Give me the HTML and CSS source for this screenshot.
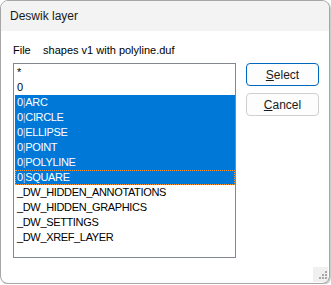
FILE: index.html
```html
<!DOCTYPE html>
<html lang="en">
<head>
    <meta charset="UTF-8">
    <title>Deswik layer</title>
    <link rel="stylesheet" href="styles.css">
</head>
<body>
    <div class="window">
        <div class="titlebar">Deswik layer</div>

        <div class="content">
            <div class="file-row">
                <span class="file-label">File</span>
                <span class="file-name">shapes v1 with polyline.duf</span>
            </div>

            <div class="main">
                <div class="listbox">
                    <div class="item">*</div>
                    <div class="item">0</div>
                    <div class="item selected">0<span class="pipe">|</span>ARC</div>
                    <div class="item selected">0<span class="pipe">|</span>CIRCLE</div>
                    <div class="item selected">0<span class="pipe">|</span>ELLIPSE</div>
                    <div class="item selected">0<span class="pipe">|</span>POINT</div>
                    <div class="item selected">0<span class="pipe">|</span>POLYLINE</div>
                    <div class="item selected focused">0<span class="pipe">|</span>SQUARE</div>
                    <div class="item">_DW_HIDDEN_ANNOTATIONS</div>
                    <div class="item">_DW_HIDDEN_GRAPHICS</div>
                    <div class="item">_DW_SETTINGS</div>
                    <div class="item">_DW_XREF_LAYER</div>
                </div>

                <div class="buttons">
                    <button class="btn default"><u>S</u>elect</button>
                    <button class="btn"><u>C</u>ancel</button>
                </div>
            </div>
        </div>

        <div class="grip">
            <svg width="12" height="12" viewBox="0 0 12 12">
                <rect x="9" y="1" width="2" height="2" fill="#a8a8a8"/>
                <rect x="6" y="4" width="2" height="2" fill="#a8a8a8"/>
                <rect x="9" y="4" width="2" height="2" fill="#a8a8a8"/>
                <rect x="3" y="7" width="2" height="2" fill="#a8a8a8"/>
                <rect x="6" y="7" width="2" height="2" fill="#a8a8a8"/>
                <rect x="9" y="7" width="2" height="2" fill="#a8a8a8"/>
            </svg>
        </div>
    </div>
</body>
</html>
```

FILE: styles.css
```css
body {
    margin: 0;
    background: #ffffff;
    font-family: "Liberation Sans", Arial, sans-serif;
}

.window {
    position: relative;
    width: 330px;
    height: 284px;
    box-sizing: border-box;
    border: 1px solid #a6a6a6;
    border-radius: 8px;
    background: #ffffff;
    overflow: hidden;
    box-shadow: 1px 1px 1px #c8c8c8;
}

.titlebar {
    height: 30px;
    background: #f3f3f3;
    padding-left: 9px;
    font-size: 12px;
    line-height: 30px;
    color: #1a1a1a;
}

.content {
    padding: 11px 0 0 12px;
}

.file-row {
    font-size: 11px;
    color: #000;
    height: 16px;
    line-height: 16px;
}

.file-label {
    display: inline-block;
    width: 27px;
}

.main {
    display: flex;
    gap: 10px;
    margin-top: 5px;
}

.listbox {
    width: 220px;
    height: 192px;
    border: 1px solid #828790;
    padding: 1px 0 0 1px;
    font-size: 11px;
    letter-spacing: -0.35px;
    color: #000;
}

.item {
    height: 15px;
    line-height: 15px;
    padding-left: 2px;
    box-sizing: border-box;
    white-space: nowrap;
}

.item.selected {
    background: #0078d7;
    color: #ffffff;
}

.item .pipe {
    color: #a9cdf2;
}

.item.focused {
    outline: 1px dotted #ff9a2e;
    outline-offset: -1px;
}

.buttons {
    display: flex;
    flex-direction: column;
    gap: 7px;
}

.btn {
    width: 73px;
    height: 23px;
    background: #fdfdfd;
    border: 1px solid #d0d0d0;
    border-radius: 4px;
    font-family: "Liberation Sans", Arial, sans-serif;
    font-size: 12px;
    color: #1a1a1a;
    padding: 0;
}

.btn.default {
    border-color: #0067c0;
}

.grip {
    position: absolute;
    right: 1px;
    bottom: 1px;
    width: 15px;
    height: 15px;
    background: #f0f0f0;
    display: flex;
    align-items: flex-end;
    justify-content: flex-end;
}
```
